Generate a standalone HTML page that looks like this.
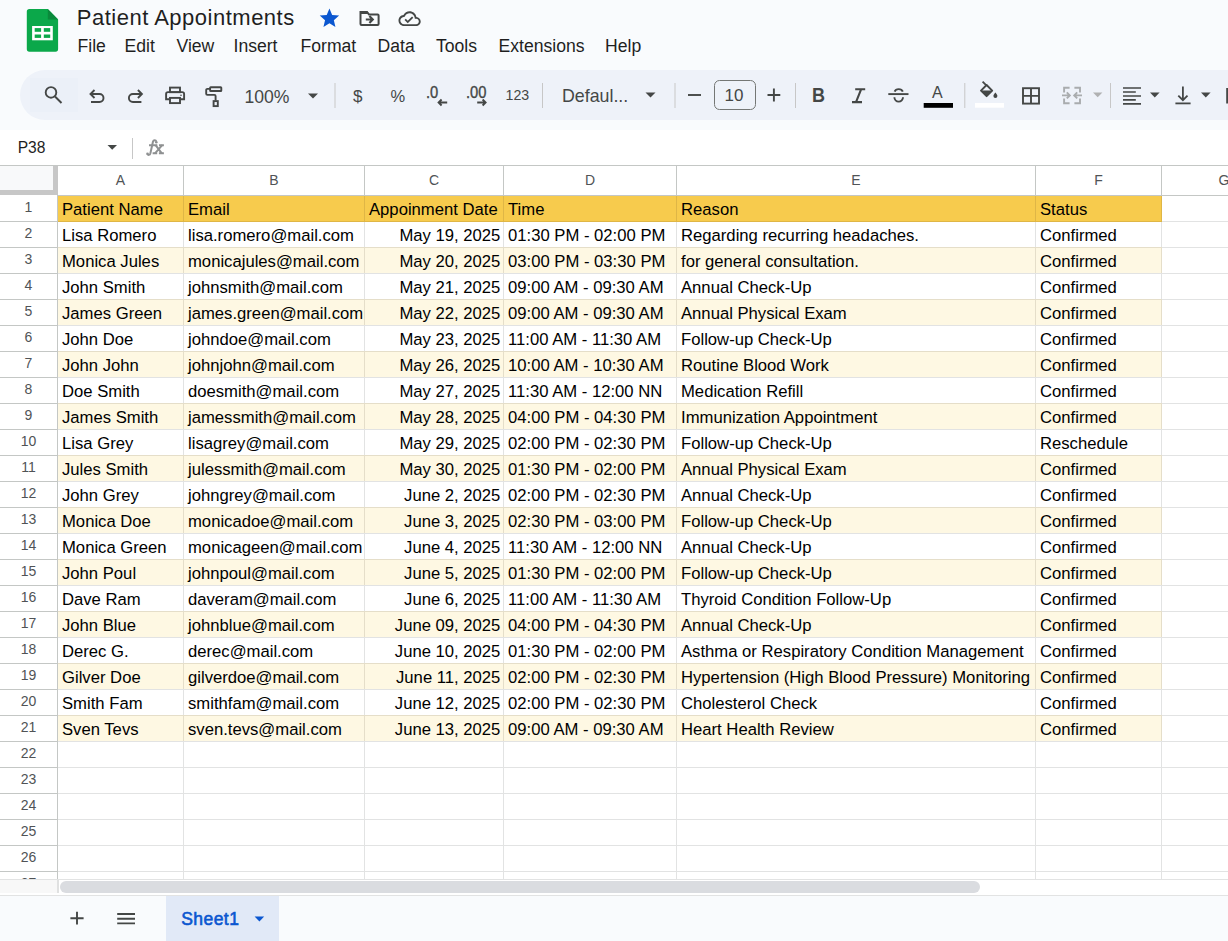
<!DOCTYPE html>
<html><head><meta charset="utf-8">
<style>
html,body{margin:0;padding:0;}
body{width:1228px;height:941px;overflow:hidden;position:relative;background:#f9fbfd;font-family:"Liberation Sans",sans-serif;color:#1f1f1f;}
.fill{position:absolute;left:58px;width:1103px;}
.hl{position:absolute;left:0;width:1228px;height:1px;}
.vl{position:absolute;width:1px;}
.ch{position:absolute;top:166px;height:29px;line-height:29px;text-align:center;font-size:14px;color:#505356;background:#fff;}
.rh{position:absolute;left:0;width:57px;background:#fff;overflow:hidden;}
.rh span{position:absolute;left:0;width:57px;top:-1px;line-height:25px;text-align:center;font-size:14px;color:#505356;}
.ct{position:absolute;height:25px;line-height:27px;font-size:16.67px;color:#000;white-space:nowrap;}
.ct.r{text-align:right;}
.t{position:absolute;white-space:nowrap;}
.menu{top:35px;font-size:17.6px;line-height:22px;color:#1f1f1f;}
.tb{top:83px;line-height:24px;color:#444746;}
#wb{position:absolute;left:0;top:130px;width:1228px;height:35px;background:#fff;}
</style></head><body>
<div id="wb"></div>
<!-- header -->
<svg style="position:absolute;left:0;top:0" width="1228" height="165" viewBox="0 0 1228 165">
  <!-- toolbar pill -->
  <rect x="20" y="70" width="1300" height="50" rx="25" fill="#eef2f9"/>
  <rect x="30" y="78" width="48" height="34" fill="#ebf0f8"/>
  <!-- logo -->
  <g transform="translate(26.8,9)">
    <path d="M2.6 0H21L31.3 10.6V40.1A2.6 2.6 0 0 1 28.7 42.7H2.6A2.6 2.6 0 0 1 0 40.1V2.6A2.6 2.6 0 0 1 2.6 0Z" fill="#0ba84a"/>
    <path d="M21 0L31.3 10.6H21Z" fill="#0a8a3b"/>
    <rect x="5.3" y="17" width="20.7" height="14.3" fill="#fff"/>
    <rect x="7.9" y="19.1" width="6.4" height="3.7" fill="#0ba84a"/>
    <rect x="17" y="19.1" width="6.4" height="3.7" fill="#0ba84a"/>
    <rect x="7.9" y="25.5" width="6.4" height="3.4" fill="#0ba84a"/>
    <rect x="17" y="25.5" width="6.4" height="3.4" fill="#0ba84a"/>
  </g>
  <!-- star -->
  <path transform="translate(317.8,6.6) scale(0.97)" d="M12 17.27L18.18 21l-1.64-7.03L22 9.24l-7.19-.61L12 2 9.19 8.63 2 9.24l5.46 4.73L5.82 21z" fill="#0b57d0"/>
  <!-- folder move -->
  <g fill="none" stroke="#444746" stroke-width="2">
    <path d="M360.5 12 H367 L369 14.5 H377.6 A1 1 0 0 1 378.6 15.5 V24 A1 1 0 0 1 377.6 25 H361.5 A1 1 0 0 1 360.5 24 Z"/>
  </g>
  <path d="M360 11.5 H367.3 L369.5 14 H360Z" fill="#444746"/>
  <path d="M365.8 19.5 H372.8 M369.4 16.1 L372.8 19.5 L369.4 22.9" fill="none" stroke="#444746" stroke-width="2.1"/>
  <!-- cloud done -->
  <path transform="translate(398.5,7.6) scale(0.925)" d="M19.35 10.04C18.67 6.59 15.64 4 12 4 9.11 4 6.6 5.64 5.35 8.04 2.34 8.36 0 10.91 0 14c0 3.31 2.69 6 6 6h13c2.76 0 5-2.240 5-5 0-2.64-2.05-4.78-4.650-4.960zM19 18H6c-2.21 0-4-1.79-4-4 0-2.05 1.53-3.76 3.56-3.97l1.07-.11.5-.95C8.080 7.14 9.94 6 12 6c2.62 0 4.88 1.86 5.39 4.43l.3 1.5 1.53.11c1.56.1 2.78 1.41 2.78 2.960 0 1.65-1.35 3-3 3zm-9-3.82l-2.09-2.09L6.5 13.5 10 17l6.01-6.01-1.41-1.41z" fill="#444746"/>

  <g fill="none" stroke="#444746" stroke-width="1.9" stroke-linecap="butt">
    <!-- search -->
    <circle cx="51" cy="92.4" r="5.3"/>
    <path d="M55 96.5 L61.5 103"/>
    <!-- undo -->
    <path d="M90.8 94 H99.5 A4 4 0 0 1 99.5 102 H91"/>
    <path d="M94.5 90 L90.5 94 L94.5 98"/>
    <!-- redo -->
    <path d="M141.6 94 H132.9 A4 4 0 0 0 132.9 102 H141.4"/>
    <path d="M137.9 90 L141.9 94 L137.9 98"/>
    <!-- print -->
    <rect x="170" y="87.6" width="10" height="4.6"/>
    <path d="M169.9 99.3 H166.1 V94 A1.9 1.9 0 0 1 168 92.1 H182.2 A1.9 1.9 0 0 1 184.1 94 V99.3 H180.1"/>
    <rect x="170" y="97.9" width="10" height="5.2"/>
    <!-- paint format -->
    <rect x="210.1" y="87.2" width="11.2" height="3.8" rx="0.6"/>
    <path d="M210 88.9 H207.4 A1.2 1.2 0 0 0 206.2 90.1 V93.7 A1.2 1.2 0 0 0 207.4 94.9 H214.4 A1.2 1.2 0 0 1 215.6 96.1 V100.5"/>
    <rect x="213.6" y="101.1" width="4.2" height="5"/>
  </g>
  <circle cx="181" cy="95.2" r="0.8" fill="#444746"/>
  <!-- separators -->
  <g fill="#c7c7c7">
    <rect x="334.5" y="83" width="1" height="25"/>
    <rect x="542" y="83" width="1" height="25"/>
    <rect x="674.5" y="83" width="1" height="25"/>
    <rect x="795" y="83" width="1" height="25"/>
    <rect x="964.3" y="83" width="1" height="25"/>
    <rect x="1110" y="83" width="1" height="25"/>
  </g>
  <!-- dropdown arrows -->
  <g fill="#444746">
    <path d="M308 93.5 H318 L313 98.5Z"/>
    <path d="M645.5 92.5 H655.5 L650.5 97.5Z"/>
    <path d="M1150 92.5 H1159.6 L1154.8 97.5Z"/>
    <path d="M1201 92.5 H1210.6 L1205.8 97.5Z"/>
  </g>
  <path d="M1093 92.5 H1102.4 L1097.7 97.3Z" fill="#b0b1b2"/>
  <!-- .0 arrows -->
  <g fill="none" stroke="#444746" stroke-width="1.9">
    <path d="M439 102.5 H447.2 M441.6 99.5 L438.6 102.5 L441.6 105.5"/>
    <path d="M477.2 102.5 H485.6 M482.6 99.5 L485.6 102.5 L482.6 105.5"/>
  </g>
  <!-- minus / plus -->
  <g fill="none" stroke="#444746" stroke-width="1.9">
    <path d="M688 95 H701"/>
    <path d="M767.5 95 H780.3 M773.9 88.6 V101.4"/>
  </g>
  <rect x="714.5" y="80.5" width="41" height="29" rx="5" fill="none" stroke="#747775" stroke-width="1"/>
  <!-- strikethrough -->
  <g fill="none" stroke="#444746" stroke-width="1.9">
    <path d="M888.3 94.1 H908.5"/>
    <path d="M894.6 91.6 A4.3 3.6 0 0 1 902.8 91.6"/>
    <path d="M894.4 97.2 A4.3 4.4 0 0 0 903 97.2"/>
  </g>
  <rect x="923.7" y="103" width="29.3" height="4.8" fill="#000"/>
  <!-- fill bucket -->
  <g fill="none" stroke="#444746" stroke-width="1.9" stroke-linejoin="round">
    <path d="M982.6 81.6 L986.6 85.6"/>
    <path d="M986.6 85 L992.2 90.6 L986.6 96.2 L981 90.6 Z"/>
  </g>
  <path d="M980.6 90.6 H992.6 L986.6 96.6Z" fill="#444746"/>
  <path d="M995.4 92.4 C996.2 93.6 997.4 94.6 997.4 95.9 A2 2 0 0 1 993.4 95.9 C993.4 94.6 994.6 93.6 995.4 92.4Z" fill="#444746"/>
  <rect x="975" y="103" width="29" height="4.7" fill="#fff"/>
  <!-- borders -->
  <g fill="none" stroke="#444746" stroke-width="1.9">
    <rect x="1023" y="88.2" width="16" height="15.4"/>
    <path d="M1031 88.2 V103.6 M1023 95.9 H1039"/>
  </g>
  <!-- merge disabled -->
  <g fill="none" stroke="#a9acae" stroke-width="1.9">
    <path d="M1069.6 87.8 H1064.1 V92.4 M1064.1 98.4 V103.2 H1069.6"/>
    <path d="M1074.4 87.8 H1080 V92.4 M1080 98.4 V103.2 H1074.4"/>
    <path d="M1062 95.4 H1069.5 M1066.8 92.4 L1069.8 95.4 L1066.8 98.4"/>
    <path d="M1082 95.4 H1074.5 M1077.2 92.4 L1074.2 95.4 L1077.2 98.4"/>
  </g>
  <!-- align left -->
  <g fill="none" stroke="#444746" stroke-width="1.7">
    <path d="M1123 88 H1141 M1123 92 H1135.8 M1123 96 H1141 M1123 99.8 H1135.8 M1123 103.9 H1141"/>
  </g>
  <!-- valign bottom -->
  <g fill="none" stroke="#444746" stroke-width="1.8">
    <path d="M1182.9 86.5 V100 M1178.3 95.6 L1182.9 100.2 L1187.5 95.6"/>
    <path d="M1175.4 103.4 H1190.6"/>
  </g>
  <rect x="1226.2" y="88" width="3" height="15.5" fill="#444746"/>
  <path d="M855.2 89.2 H865.2 M852 102.1 H862 M861.2 89.2 L856 102.1" fill="none" stroke="#444746" stroke-width="2.1"/>
  <!-- name box arrow, separator, fx -->
  <path d="M107.5 145 H117 L112.2 149.8Z" fill="#444746"/>
  <rect x="132" y="138" width="1" height="21" fill="#c7c7c7"/>
</svg>
<div class="t" style="left:76.8px;top:3px;font-size:22px;letter-spacing:0.5px;line-height:30px;color:#1f1f1f">Patient Appointments</div>
<div class="t menu" style="left:77.5px">File</div>
<div class="t menu" style="left:124.5px">Edit</div>
<div class="t menu" style="left:176.5px">View</div>
<div class="t menu" style="left:233.5px">Insert</div>
<div class="t menu" style="left:300.5px">Format</div>
<div class="t menu" style="left:377.5px">Data</div>
<div class="t menu" style="left:436px">Tools</div>
<div class="t menu" style="left:498.5px">Extensions</div>
<div class="t menu" style="left:605px">Help</div>
<div class="t tb" style="left:244.5px;top:84.5px;font-size:17.6px">100%</div>
<div class="t tb" style="left:353px;top:84.5px;font-size:17px">$</div>
<div class="t tb" style="left:390.5px;top:84px;font-size:16.5px">%</div>
<div class="t tb" style="left:426px;top:80.5px;font-size:16px;-webkit-text-stroke:0.35px #444746;transform:scaleX(0.92);transform-origin:0 0">.0</div>
<div class="t tb" style="left:466px;top:80.5px;font-size:16px;-webkit-text-stroke:0.35px #444746;transform:scaleX(0.92);transform-origin:0 0">.00</div>
<div class="t tb" style="left:505.5px;top:82.5px;font-size:14.2px">123</div>
<div class="t tb" style="left:562px;top:84px;font-size:17.8px">Defaul...</div>
<div class="t tb" style="left:724.5px;top:84px;font-size:17px">10</div>
<div class="t tb" style="left:811.5px;top:83.3px;font-size:20px;font-weight:bold;transform:scaleX(0.9);transform-origin:0 0">B</div>

<div class="t tb" style="left:932px;top:80.5px;font-size:16px">A</div>
<div class="t" style="left:17.7px;top:137px;font-size:15.6px;line-height:22px;color:#1f1f1f">P38</div>
<svg style="position:absolute;left:140px;top:134px" width="30" height="28" viewBox="140 134 30 28">
 <g fill="none" stroke="#8f9192" stroke-width="2">
  <path d="M156.3 141.6 C155.8 139.8 153.6 139.6 153 141.6 L150.4 153.2 C149.9 155.2 148 155.4 147.5 153.9"/>
  <path d="M149 145.2 H157.3 M159 145.2 H163.9 M152.6 153.3 H157.2 M158.9 153.3 H163.9"/>
  <path d="M155.6 145.2 L161.8 153.3 M162.2 145.2 L155 153.3"/>
 </g>
 <circle cx="156.3" cy="142.2" r="1.3" fill="#8f9192"/>
 <circle cx="147.5" cy="153.7" r="1.3" fill="#8f9192"/>
</svg>

<div style="position:absolute;left:0;top:165px;width:1228px;height:715px;background:#fff"></div>
<div class="fill" style="top:196px;height:25px;background:#f7cb4d"></div>
<div class="fill" style="top:222px;height:25px;background:#ffffff"></div>
<div class="fill" style="top:248px;height:25px;background:#fef8e3"></div>
<div class="fill" style="top:274px;height:25px;background:#ffffff"></div>
<div class="fill" style="top:300px;height:25px;background:#fef8e3"></div>
<div class="fill" style="top:326px;height:25px;background:#ffffff"></div>
<div class="fill" style="top:352px;height:25px;background:#fef8e3"></div>
<div class="fill" style="top:378px;height:25px;background:#ffffff"></div>
<div class="fill" style="top:404px;height:25px;background:#fef8e3"></div>
<div class="fill" style="top:430px;height:25px;background:#ffffff"></div>
<div class="fill" style="top:456px;height:25px;background:#fef8e3"></div>
<div class="fill" style="top:482px;height:25px;background:#ffffff"></div>
<div class="fill" style="top:508px;height:25px;background:#fef8e3"></div>
<div class="fill" style="top:534px;height:25px;background:#ffffff"></div>
<div class="fill" style="top:560px;height:25px;background:#fef8e3"></div>
<div class="fill" style="top:586px;height:25px;background:#ffffff"></div>
<div class="fill" style="top:612px;height:25px;background:#fef8e3"></div>
<div class="fill" style="top:638px;height:25px;background:#ffffff"></div>
<div class="fill" style="top:664px;height:25px;background:#fef8e3"></div>
<div class="fill" style="top:690px;height:25px;background:#ffffff"></div>
<div class="fill" style="top:716px;height:25px;background:#fef8e3"></div>
<div class="hl" style="top:221px;background:#e2e3e3"></div>
<div class="hl" style="top:247px;background:#e2e3e3"></div>
<div class="hl" style="top:273px;background:#e2e3e3"></div>
<div class="hl" style="top:299px;background:#e2e3e3"></div>
<div class="hl" style="top:325px;background:#e2e3e3"></div>
<div class="hl" style="top:351px;background:#e2e3e3"></div>
<div class="hl" style="top:377px;background:#e2e3e3"></div>
<div class="hl" style="top:403px;background:#e2e3e3"></div>
<div class="hl" style="top:429px;background:#e2e3e3"></div>
<div class="hl" style="top:455px;background:#e2e3e3"></div>
<div class="hl" style="top:481px;background:#e2e3e3"></div>
<div class="hl" style="top:507px;background:#e2e3e3"></div>
<div class="hl" style="top:533px;background:#e2e3e3"></div>
<div class="hl" style="top:559px;background:#e2e3e3"></div>
<div class="hl" style="top:585px;background:#e2e3e3"></div>
<div class="hl" style="top:611px;background:#e2e3e3"></div>
<div class="hl" style="top:637px;background:#e2e3e3"></div>
<div class="hl" style="top:663px;background:#e2e3e3"></div>
<div class="hl" style="top:689px;background:#e2e3e3"></div>
<div class="hl" style="top:715px;background:#e2e3e3"></div>
<div class="hl" style="top:741px;background:#e2e3e3"></div>
<div class="hl" style="top:767px;background:#e2e3e3"></div>
<div class="hl" style="top:793px;background:#e2e3e3"></div>
<div class="hl" style="top:819px;background:#e2e3e3"></div>
<div class="hl" style="top:845px;background:#e2e3e3"></div>
<div class="hl" style="top:871px;background:#e2e3e3"></div>
<div class="vl" style="left:183px;top:196px;height:683px;background:#e2e3e3"></div>
<div class="vl" style="left:364px;top:196px;height:683px;background:#e2e3e3"></div>
<div class="vl" style="left:503px;top:196px;height:683px;background:#e2e3e3"></div>
<div class="vl" style="left:676px;top:196px;height:683px;background:#e2e3e3"></div>
<div class="vl" style="left:1035px;top:196px;height:683px;background:#e2e3e3"></div>
<div class="vl" style="left:1161px;top:196px;height:683px;background:#e2e3e3"></div>
<div class="vl" style="left:183px;top:196px;height:25px;background:#dfb646"></div>
<div class="vl" style="left:364px;top:196px;height:25px;background:#dfb646"></div>
<div class="vl" style="left:503px;top:196px;height:25px;background:#dfb646"></div>
<div class="vl" style="left:676px;top:196px;height:25px;background:#dfb646"></div>
<div class="vl" style="left:1035px;top:196px;height:25px;background:#dfb646"></div>
<div class="vl" style="left:1161px;top:196px;height:25px;background:#dfb646"></div>
<div class="hl" style="left:58px;width:1104px;top:221px;background:#dfb646"></div>
<div class="vl" style="left:183px;top:247px;height:26px;background:#e5dec9"></div>
<div class="vl" style="left:364px;top:247px;height:26px;background:#e5dec9"></div>
<div class="vl" style="left:503px;top:247px;height:26px;background:#e5dec9"></div>
<div class="vl" style="left:676px;top:247px;height:26px;background:#e5dec9"></div>
<div class="vl" style="left:1035px;top:247px;height:26px;background:#e5dec9"></div>
<div class="vl" style="left:1161px;top:247px;height:26px;background:#e5dec9"></div>
<div class="hl" style="left:58px;width:1104px;top:247px;background:#e5dec9"></div>
<div class="vl" style="left:183px;top:299px;height:26px;background:#e5dec9"></div>
<div class="vl" style="left:364px;top:299px;height:26px;background:#e5dec9"></div>
<div class="vl" style="left:503px;top:299px;height:26px;background:#e5dec9"></div>
<div class="vl" style="left:676px;top:299px;height:26px;background:#e5dec9"></div>
<div class="vl" style="left:1035px;top:299px;height:26px;background:#e5dec9"></div>
<div class="vl" style="left:1161px;top:299px;height:26px;background:#e5dec9"></div>
<div class="hl" style="left:58px;width:1104px;top:299px;background:#e5dec9"></div>
<div class="vl" style="left:183px;top:351px;height:26px;background:#e5dec9"></div>
<div class="vl" style="left:364px;top:351px;height:26px;background:#e5dec9"></div>
<div class="vl" style="left:503px;top:351px;height:26px;background:#e5dec9"></div>
<div class="vl" style="left:676px;top:351px;height:26px;background:#e5dec9"></div>
<div class="vl" style="left:1035px;top:351px;height:26px;background:#e5dec9"></div>
<div class="vl" style="left:1161px;top:351px;height:26px;background:#e5dec9"></div>
<div class="hl" style="left:58px;width:1104px;top:351px;background:#e5dec9"></div>
<div class="vl" style="left:183px;top:403px;height:26px;background:#e5dec9"></div>
<div class="vl" style="left:364px;top:403px;height:26px;background:#e5dec9"></div>
<div class="vl" style="left:503px;top:403px;height:26px;background:#e5dec9"></div>
<div class="vl" style="left:676px;top:403px;height:26px;background:#e5dec9"></div>
<div class="vl" style="left:1035px;top:403px;height:26px;background:#e5dec9"></div>
<div class="vl" style="left:1161px;top:403px;height:26px;background:#e5dec9"></div>
<div class="hl" style="left:58px;width:1104px;top:403px;background:#e5dec9"></div>
<div class="vl" style="left:183px;top:455px;height:26px;background:#e5dec9"></div>
<div class="vl" style="left:364px;top:455px;height:26px;background:#e5dec9"></div>
<div class="vl" style="left:503px;top:455px;height:26px;background:#e5dec9"></div>
<div class="vl" style="left:676px;top:455px;height:26px;background:#e5dec9"></div>
<div class="vl" style="left:1035px;top:455px;height:26px;background:#e5dec9"></div>
<div class="vl" style="left:1161px;top:455px;height:26px;background:#e5dec9"></div>
<div class="hl" style="left:58px;width:1104px;top:455px;background:#e5dec9"></div>
<div class="vl" style="left:183px;top:507px;height:26px;background:#e5dec9"></div>
<div class="vl" style="left:364px;top:507px;height:26px;background:#e5dec9"></div>
<div class="vl" style="left:503px;top:507px;height:26px;background:#e5dec9"></div>
<div class="vl" style="left:676px;top:507px;height:26px;background:#e5dec9"></div>
<div class="vl" style="left:1035px;top:507px;height:26px;background:#e5dec9"></div>
<div class="vl" style="left:1161px;top:507px;height:26px;background:#e5dec9"></div>
<div class="hl" style="left:58px;width:1104px;top:507px;background:#e5dec9"></div>
<div class="vl" style="left:183px;top:559px;height:26px;background:#e5dec9"></div>
<div class="vl" style="left:364px;top:559px;height:26px;background:#e5dec9"></div>
<div class="vl" style="left:503px;top:559px;height:26px;background:#e5dec9"></div>
<div class="vl" style="left:676px;top:559px;height:26px;background:#e5dec9"></div>
<div class="vl" style="left:1035px;top:559px;height:26px;background:#e5dec9"></div>
<div class="vl" style="left:1161px;top:559px;height:26px;background:#e5dec9"></div>
<div class="hl" style="left:58px;width:1104px;top:559px;background:#e5dec9"></div>
<div class="vl" style="left:183px;top:611px;height:26px;background:#e5dec9"></div>
<div class="vl" style="left:364px;top:611px;height:26px;background:#e5dec9"></div>
<div class="vl" style="left:503px;top:611px;height:26px;background:#e5dec9"></div>
<div class="vl" style="left:676px;top:611px;height:26px;background:#e5dec9"></div>
<div class="vl" style="left:1035px;top:611px;height:26px;background:#e5dec9"></div>
<div class="vl" style="left:1161px;top:611px;height:26px;background:#e5dec9"></div>
<div class="hl" style="left:58px;width:1104px;top:611px;background:#e5dec9"></div>
<div class="vl" style="left:183px;top:663px;height:26px;background:#e5dec9"></div>
<div class="vl" style="left:364px;top:663px;height:26px;background:#e5dec9"></div>
<div class="vl" style="left:503px;top:663px;height:26px;background:#e5dec9"></div>
<div class="vl" style="left:676px;top:663px;height:26px;background:#e5dec9"></div>
<div class="vl" style="left:1035px;top:663px;height:26px;background:#e5dec9"></div>
<div class="vl" style="left:1161px;top:663px;height:26px;background:#e5dec9"></div>
<div class="hl" style="left:58px;width:1104px;top:663px;background:#e5dec9"></div>
<div class="vl" style="left:183px;top:715px;height:26px;background:#e5dec9"></div>
<div class="vl" style="left:364px;top:715px;height:26px;background:#e5dec9"></div>
<div class="vl" style="left:503px;top:715px;height:26px;background:#e5dec9"></div>
<div class="vl" style="left:676px;top:715px;height:26px;background:#e5dec9"></div>
<div class="vl" style="left:1035px;top:715px;height:26px;background:#e5dec9"></div>
<div class="vl" style="left:1161px;top:715px;height:26px;background:#e5dec9"></div>
<div class="hl" style="left:58px;width:1104px;top:715px;background:#e5dec9"></div>
<div class="hl" style="top:165px;background:#c4c7c5"></div>
<div class="hl" style="top:195px;left:58px;background:#c4c7c5"></div>
<div class="ch" style="left:58px;width:125px">A</div>
<div class="vl" style="left:183px;top:166px;height:29px;background:#c4c7c5"></div>
<div class="ch" style="left:184px;width:180px">B</div>
<div class="vl" style="left:364px;top:166px;height:29px;background:#c4c7c5"></div>
<div class="ch" style="left:365px;width:138px">C</div>
<div class="vl" style="left:503px;top:166px;height:29px;background:#c4c7c5"></div>
<div class="ch" style="left:504px;width:172px">D</div>
<div class="vl" style="left:676px;top:166px;height:29px;background:#c4c7c5"></div>
<div class="ch" style="left:677px;width:358px">E</div>
<div class="vl" style="left:1035px;top:166px;height:29px;background:#c4c7c5"></div>
<div class="ch" style="left:1036px;width:125px">F</div>
<div class="vl" style="left:1161px;top:166px;height:29px;background:#c4c7c5"></div>
<div class="ch" style="left:1162px;width:124px">G</div>
<div class="rh" style="top:196px;height:25px"><span>1</span></div>
<div class="hl" style="top:221px;width:57px;background:#c4c7c5"></div>
<div class="rh" style="top:222px;height:25px"><span>2</span></div>
<div class="hl" style="top:247px;width:57px;background:#c4c7c5"></div>
<div class="rh" style="top:248px;height:25px"><span>3</span></div>
<div class="hl" style="top:273px;width:57px;background:#c4c7c5"></div>
<div class="rh" style="top:274px;height:25px"><span>4</span></div>
<div class="hl" style="top:299px;width:57px;background:#c4c7c5"></div>
<div class="rh" style="top:300px;height:25px"><span>5</span></div>
<div class="hl" style="top:325px;width:57px;background:#c4c7c5"></div>
<div class="rh" style="top:326px;height:25px"><span>6</span></div>
<div class="hl" style="top:351px;width:57px;background:#c4c7c5"></div>
<div class="rh" style="top:352px;height:25px"><span>7</span></div>
<div class="hl" style="top:377px;width:57px;background:#c4c7c5"></div>
<div class="rh" style="top:378px;height:25px"><span>8</span></div>
<div class="hl" style="top:403px;width:57px;background:#c4c7c5"></div>
<div class="rh" style="top:404px;height:25px"><span>9</span></div>
<div class="hl" style="top:429px;width:57px;background:#c4c7c5"></div>
<div class="rh" style="top:430px;height:25px"><span>10</span></div>
<div class="hl" style="top:455px;width:57px;background:#c4c7c5"></div>
<div class="rh" style="top:456px;height:25px"><span>11</span></div>
<div class="hl" style="top:481px;width:57px;background:#c4c7c5"></div>
<div class="rh" style="top:482px;height:25px"><span>12</span></div>
<div class="hl" style="top:507px;width:57px;background:#c4c7c5"></div>
<div class="rh" style="top:508px;height:25px"><span>13</span></div>
<div class="hl" style="top:533px;width:57px;background:#c4c7c5"></div>
<div class="rh" style="top:534px;height:25px"><span>14</span></div>
<div class="hl" style="top:559px;width:57px;background:#c4c7c5"></div>
<div class="rh" style="top:560px;height:25px"><span>15</span></div>
<div class="hl" style="top:585px;width:57px;background:#c4c7c5"></div>
<div class="rh" style="top:586px;height:25px"><span>16</span></div>
<div class="hl" style="top:611px;width:57px;background:#c4c7c5"></div>
<div class="rh" style="top:612px;height:25px"><span>17</span></div>
<div class="hl" style="top:637px;width:57px;background:#c4c7c5"></div>
<div class="rh" style="top:638px;height:25px"><span>18</span></div>
<div class="hl" style="top:663px;width:57px;background:#c4c7c5"></div>
<div class="rh" style="top:664px;height:25px"><span>19</span></div>
<div class="hl" style="top:689px;width:57px;background:#c4c7c5"></div>
<div class="rh" style="top:690px;height:25px"><span>20</span></div>
<div class="hl" style="top:715px;width:57px;background:#c4c7c5"></div>
<div class="rh" style="top:716px;height:25px"><span>21</span></div>
<div class="hl" style="top:741px;width:57px;background:#c4c7c5"></div>
<div class="rh" style="top:742px;height:25px"><span>22</span></div>
<div class="hl" style="top:767px;width:57px;background:#c4c7c5"></div>
<div class="rh" style="top:768px;height:25px"><span>23</span></div>
<div class="hl" style="top:793px;width:57px;background:#c4c7c5"></div>
<div class="rh" style="top:794px;height:25px"><span>24</span></div>
<div class="hl" style="top:819px;width:57px;background:#c4c7c5"></div>
<div class="rh" style="top:820px;height:25px"><span>25</span></div>
<div class="hl" style="top:845px;width:57px;background:#c4c7c5"></div>
<div class="rh" style="top:846px;height:25px"><span>26</span></div>
<div class="hl" style="top:871px;width:57px;background:#c4c7c5"></div>
<div class="rh" style="top:872px;height:7px"><span>27</span></div>
<div class="hl" style="top:897px;width:57px;background:#c4c7c5"></div>
<div class="vl" style="left:57px;top:166px;height:714px;background:#c4c7c5"></div>
<div style="position:absolute;left:0;top:166px;width:53px;height:24px;background:#f8f9fa"></div>
<div style="position:absolute;left:53px;top:166px;width:5px;height:29px;background:#c7c7c7"></div>
<div style="position:absolute;left:0;top:190px;width:58px;height:5px;background:#c7c7c7"></div>
<div class="ct" style="top:196px;left:62px">Patient Name</div>
<div class="ct" style="top:196px;left:188px">Email</div>
<div class="ct" style="top:196px;left:369px">Appoinment Date</div>
<div class="ct" style="top:196px;left:508px">Time</div>
<div class="ct" style="top:196px;left:681px">Reason</div>
<div class="ct" style="top:196px;left:1040px">Status</div>
<div class="ct" style="top:222px;left:62px">Lisa Romero</div>
<div class="ct" style="top:222px;left:188px">lisa.romero@mail.com</div>
<div class="ct r" style="top:222px;left:365px;width:135.4px">May 19, 2025</div>
<div class="ct" style="top:222px;left:508px">01:30 PM - 02:00 PM</div>
<div class="ct" style="top:222px;left:681px">Regarding recurring headaches.</div>
<div class="ct" style="top:222px;left:1040px">Confirmed</div>
<div class="ct" style="top:248px;left:62px">Monica Jules</div>
<div class="ct" style="top:248px;left:188px">monicajules@mail.com</div>
<div class="ct r" style="top:248px;left:365px;width:135.4px">May 20, 2025</div>
<div class="ct" style="top:248px;left:508px">03:00 PM - 03:30 PM</div>
<div class="ct" style="top:248px;left:681px">for general consultation.</div>
<div class="ct" style="top:248px;left:1040px">Confirmed</div>
<div class="ct" style="top:274px;left:62px">John Smith</div>
<div class="ct" style="top:274px;left:188px">johnsmith@mail.com</div>
<div class="ct r" style="top:274px;left:365px;width:135.4px">May 21, 2025</div>
<div class="ct" style="top:274px;left:508px">09:00 AM - 09:30 AM</div>
<div class="ct" style="top:274px;left:681px">Annual Check-Up</div>
<div class="ct" style="top:274px;left:1040px">Confirmed</div>
<div class="ct" style="top:300px;left:62px">James Green</div>
<div class="ct" style="top:300px;left:188px">james.green@mail.com</div>
<div class="ct r" style="top:300px;left:365px;width:135.4px">May 22, 2025</div>
<div class="ct" style="top:300px;left:508px">09:00 AM - 09:30 AM</div>
<div class="ct" style="top:300px;left:681px">Annual Physical Exam</div>
<div class="ct" style="top:300px;left:1040px">Confirmed</div>
<div class="ct" style="top:326px;left:62px">John Doe</div>
<div class="ct" style="top:326px;left:188px">johndoe@mail.com</div>
<div class="ct r" style="top:326px;left:365px;width:135.4px">May 23, 2025</div>
<div class="ct" style="top:326px;left:508px">11:00 AM - 11:30 AM</div>
<div class="ct" style="top:326px;left:681px">Follow-up Check-Up</div>
<div class="ct" style="top:326px;left:1040px">Confirmed</div>
<div class="ct" style="top:352px;left:62px">John John</div>
<div class="ct" style="top:352px;left:188px">johnjohn@mail.com</div>
<div class="ct r" style="top:352px;left:365px;width:135.4px">May 26, 2025</div>
<div class="ct" style="top:352px;left:508px">10:00 AM - 10:30 AM</div>
<div class="ct" style="top:352px;left:681px">Routine Blood Work</div>
<div class="ct" style="top:352px;left:1040px">Confirmed</div>
<div class="ct" style="top:378px;left:62px">Doe Smith</div>
<div class="ct" style="top:378px;left:188px">doesmith@mail.com</div>
<div class="ct r" style="top:378px;left:365px;width:135.4px">May 27, 2025</div>
<div class="ct" style="top:378px;left:508px">11:30 AM - 12:00 NN</div>
<div class="ct" style="top:378px;left:681px">Medication Refill</div>
<div class="ct" style="top:378px;left:1040px">Confirmed</div>
<div class="ct" style="top:404px;left:62px">James Smith</div>
<div class="ct" style="top:404px;left:188px">jamessmith@mail.com</div>
<div class="ct r" style="top:404px;left:365px;width:135.4px">May 28, 2025</div>
<div class="ct" style="top:404px;left:508px">04:00 PM - 04:30 PM</div>
<div class="ct" style="top:404px;left:681px">Immunization Appointment</div>
<div class="ct" style="top:404px;left:1040px">Confirmed</div>
<div class="ct" style="top:430px;left:62px">Lisa Grey</div>
<div class="ct" style="top:430px;left:188px">lisagrey@mail.com</div>
<div class="ct r" style="top:430px;left:365px;width:135.4px">May 29, 2025</div>
<div class="ct" style="top:430px;left:508px">02:00 PM - 02:30 PM</div>
<div class="ct" style="top:430px;left:681px">Follow-up Check-Up</div>
<div class="ct" style="top:430px;left:1040px">Reschedule</div>
<div class="ct" style="top:456px;left:62px">Jules Smith</div>
<div class="ct" style="top:456px;left:188px">julessmith@mail.com</div>
<div class="ct r" style="top:456px;left:365px;width:135.4px">May 30, 2025</div>
<div class="ct" style="top:456px;left:508px">01:30 PM - 02:00 PM</div>
<div class="ct" style="top:456px;left:681px">Annual Physical Exam</div>
<div class="ct" style="top:456px;left:1040px">Confirmed</div>
<div class="ct" style="top:482px;left:62px">John Grey</div>
<div class="ct" style="top:482px;left:188px">johngrey@mail.com</div>
<div class="ct r" style="top:482px;left:365px;width:135.4px">June 2, 2025</div>
<div class="ct" style="top:482px;left:508px">02:00 PM - 02:30 PM</div>
<div class="ct" style="top:482px;left:681px">Annual Check-Up</div>
<div class="ct" style="top:482px;left:1040px">Confirmed</div>
<div class="ct" style="top:508px;left:62px">Monica Doe</div>
<div class="ct" style="top:508px;left:188px">monicadoe@mail.com</div>
<div class="ct r" style="top:508px;left:365px;width:135.4px">June 3, 2025</div>
<div class="ct" style="top:508px;left:508px">02:30 PM - 03:00 PM</div>
<div class="ct" style="top:508px;left:681px">Follow-up Check-Up</div>
<div class="ct" style="top:508px;left:1040px">Confirmed</div>
<div class="ct" style="top:534px;left:62px">Monica Green</div>
<div class="ct" style="top:534px;left:188px">monicageen@mail.com</div>
<div class="ct r" style="top:534px;left:365px;width:135.4px">June 4, 2025</div>
<div class="ct" style="top:534px;left:508px">11:30 AM - 12:00 NN</div>
<div class="ct" style="top:534px;left:681px">Annual Check-Up</div>
<div class="ct" style="top:534px;left:1040px">Confirmed</div>
<div class="ct" style="top:560px;left:62px">John Poul</div>
<div class="ct" style="top:560px;left:188px">johnpoul@mail.com</div>
<div class="ct r" style="top:560px;left:365px;width:135.4px">June 5, 2025</div>
<div class="ct" style="top:560px;left:508px">01:30 PM - 02:00 PM</div>
<div class="ct" style="top:560px;left:681px">Follow-up Check-Up</div>
<div class="ct" style="top:560px;left:1040px">Confirmed</div>
<div class="ct" style="top:586px;left:62px">Dave Ram</div>
<div class="ct" style="top:586px;left:188px">daveram@mail.com</div>
<div class="ct r" style="top:586px;left:365px;width:135.4px">June 6, 2025</div>
<div class="ct" style="top:586px;left:508px">11:00 AM - 11:30 AM</div>
<div class="ct" style="top:586px;left:681px">Thyroid Condition Follow-Up</div>
<div class="ct" style="top:586px;left:1040px">Confirmed</div>
<div class="ct" style="top:612px;left:62px">John Blue</div>
<div class="ct" style="top:612px;left:188px">johnblue@mail.com</div>
<div class="ct r" style="top:612px;left:365px;width:135.4px">June 09, 2025</div>
<div class="ct" style="top:612px;left:508px">04:00 PM - 04:30 PM</div>
<div class="ct" style="top:612px;left:681px">Annual Check-Up</div>
<div class="ct" style="top:612px;left:1040px">Confirmed</div>
<div class="ct" style="top:638px;left:62px">Derec G.</div>
<div class="ct" style="top:638px;left:188px">derec@mail.com</div>
<div class="ct r" style="top:638px;left:365px;width:135.4px">June 10, 2025</div>
<div class="ct" style="top:638px;left:508px">01:30 PM - 02:00 PM</div>
<div class="ct" style="top:638px;left:681px">Asthma or Respiratory Condition Management</div>
<div class="ct" style="top:638px;left:1040px">Confirmed</div>
<div class="ct" style="top:664px;left:62px">Gilver Doe</div>
<div class="ct" style="top:664px;left:188px">gilverdoe@mail.com</div>
<div class="ct r" style="top:664px;left:365px;width:135.4px">June 11, 2025</div>
<div class="ct" style="top:664px;left:508px">02:00 PM - 02:30 PM</div>
<div class="ct" style="top:664px;left:681px">Hypertension (High Blood Pressure) Monitoring</div>
<div class="ct" style="top:664px;left:1040px">Confirmed</div>
<div class="ct" style="top:690px;left:62px">Smith Fam</div>
<div class="ct" style="top:690px;left:188px">smithfam@mail.com</div>
<div class="ct r" style="top:690px;left:365px;width:135.4px">June 12, 2025</div>
<div class="ct" style="top:690px;left:508px">02:00 PM - 02:30 PM</div>
<div class="ct" style="top:690px;left:681px">Cholesterol Check</div>
<div class="ct" style="top:690px;left:1040px">Confirmed</div>
<div class="ct" style="top:716px;left:62px">Sven Tevs</div>
<div class="ct" style="top:716px;left:188px">sven.tevs@mail.com</div>
<div class="ct r" style="top:716px;left:365px;width:135.4px">June 13, 2025</div>
<div class="ct" style="top:716px;left:508px">09:00 AM - 09:30 AM</div>
<div class="ct" style="top:716px;left:681px">Heart Health Review</div>
<div class="ct" style="top:716px;left:1040px">Confirmed</div>
<div class="hl" style="top:879px;background:#e2e3e3"></div>
<div style="position:absolute;left:0;top:880px;width:1228px;height:15px;background:#fff"></div>
<div style="position:absolute;left:0;top:880px;width:57px;height:13px;background:#f8f8f8"></div>
<div class="vl" style="left:57px;width:2px;top:880px;height:13px;background:#e0e1e1"></div>
<div style="position:absolute;left:60px;top:881px;width:920px;height:12px;border-radius:6px;background:#dadce0"></div>
<div class="hl" style="top:895px;background:#e2e3e3"></div>
<div style="position:absolute;left:0;top:896px;width:1228px;height:45px;background:#f9fbfd"></div>
<div style="position:absolute;left:166px;top:896px;width:113px;height:45px;background:#e1e9f7"></div>
<svg style="position:absolute;left:0;top:896px" width="300" height="45" viewBox="0 896 300 45">
  <g fill="none" stroke="#444746" stroke-width="1.9">
    <path d="M70.4 918.2 H83.6 M77 911.8 V924.6"/>
    <path d="M117.2 914 H135 M117.2 918.7 H135 M117.2 923.4 H135"/>
  </g>
  <path d="M254.6 916.5 H264.2 L259.4 921.5Z" fill="#0b57d0"/>
</svg>
<div class="t" style="left:181.2px;top:907px;font-size:17.5px;letter-spacing:0.45px;line-height:24px;color:#0b57d0;-webkit-text-stroke:0.6px #0b57d0">Sheet1</div>

</body></html>
